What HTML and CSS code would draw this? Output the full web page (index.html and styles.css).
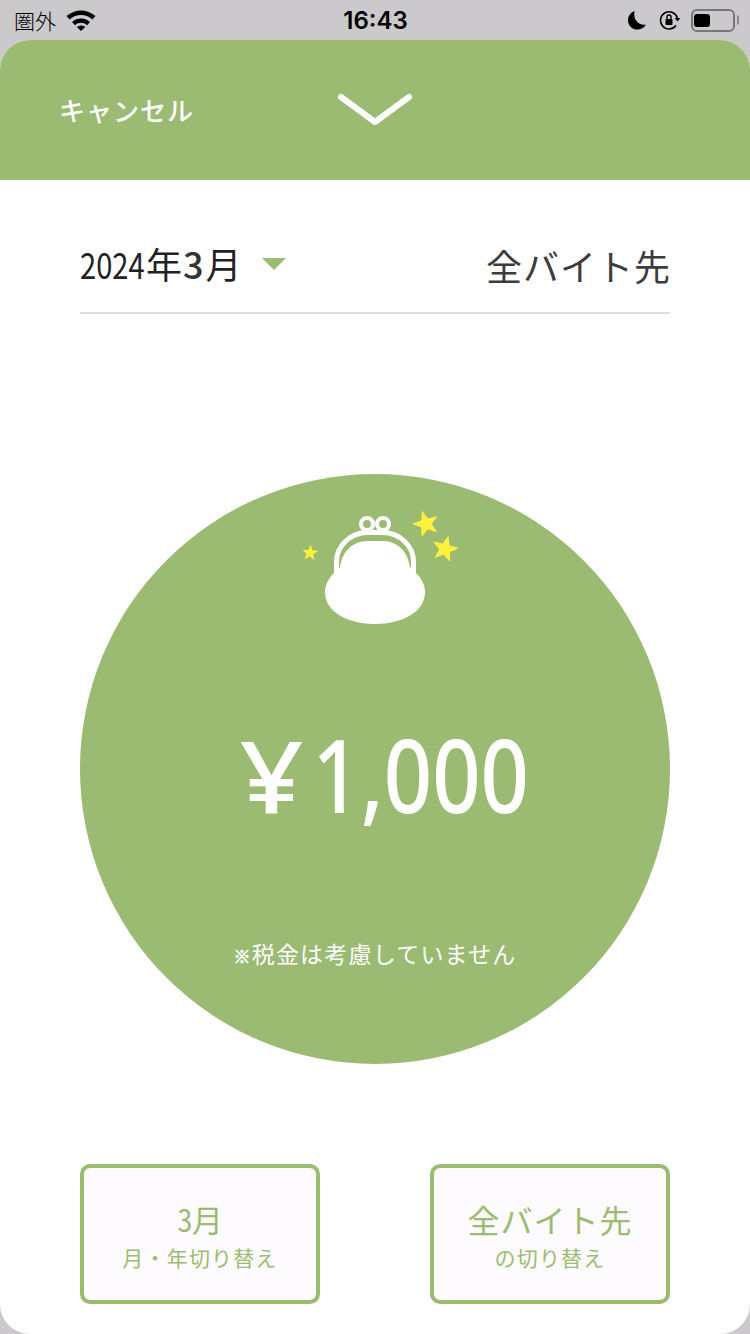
FILE: index.html
```html
<!DOCTYPE html>
<html lang="ja">
  <head>
    <meta charset="UTF-8" />
    <meta name="viewport" content="width=device-width, initial-scale=1.0" />
    <title>今月の給料</title>
    <link rel="stylesheet" href="styles.css">
  </head>
  <body>
    <div class="status-bar">
      <div class="status-left">
        <span class="carrier">圏外</span>
        <svg class="wifi" width="30" height="22" viewBox="0 0 30 22">
          <path d="M0.5 7 C9 -0.5 21 -0.5 29.5 7 L26.4 10.4 C19.8 4.6 10.2 4.6 3.6 10.4 Z" />
          <path d="M6 13 C11.4 8.4 18.6 8.4 24 13 L21 16.2 C17.2 13 12.8 13 9 16.2 Z" />
          <path d="M10.8 18 C13.4 16 16.6 16 19.2 18 L15 22 Z" />
        </svg>
      </div>
      <span class="clock">16:43</span>
      <div class="status-right">
        <svg class="moon" width="18" height="20" viewBox="0 0 18 20">
          <path d="M6.5 1 C2.5 2.6 0 6.2 0 10.2 C0 15.4 4.2 19.6 9.4 19.6 C13 19.6 16.2 17.6 18 14.4 C11.5 15.8 4.8 10.8 6.5 1 Z" />
        </svg>
        <svg width="22" height="20" viewBox="0 0 22 20">
          <path d="M18.4 8 A8.6 8.6 0 1 0 17 15.5" fill="none" stroke="#000" stroke-width="1.6" />
          <path d="M15.6 8 L21.4 8 L18.5 11.6 Z" />
          <rect x="6.5" y="9" width="7" height="6" rx="1" />
          <path d="M8 9 V7 A2 2 0 0 1 12 7 V9" fill="none" stroke="#000" stroke-width="1.4" />
        </svg>
        <div class="battery">
          <div class="battery-level"></div>
        </div>
        <div class="battery-cap"></div>
      </div>
    </div>

    <div class="sheet">
      <header class="sheet-header">
        <span class="cancel">キャンセル</span>
        <svg class="chevron" width="76" height="40" viewBox="0 0 76 40">
          <path d="M4 5 L38 30 L72 5" fill="none" stroke="#fff" stroke-width="6" stroke-linecap="round" stroke-linejoin="round" />
        </svg>
      </header>

      <main class="content">
        <div class="filter-row">
          <div class="month-select">
            <span class="month"><span class="year">2024</span>年<span class="month-num">3</span>月</span>
            <span class="triangle"></span>
          </div>
          <span class="workplace">全バイト先</span>
        </div>

        <div class="total-circle">
          <svg class="purse" width="170" height="115" viewBox="0 0 170 115">
            <defs>
              <polygon id="star" points="0,-1 0.247,-0.34 0.951,-0.309 0.4,0.13 0.588,0.809 0,0.42 -0.588,0.809 -0.4,0.13 -0.951,-0.309 -0.247,-0.34" fill="#fdf03f" />
            </defs>
            <circle cx="77" cy="14" r="6" fill="none" stroke="#fff" stroke-width="4" />
            <circle cx="93" cy="14" r="6" fill="none" stroke="#fff" stroke-width="4" />
            <path d="M46.500 63 V52 C46.500 36 60 22.500 78 22.500 H92 C110 22.500 123.500 36 123.500 52 V63" fill="none" stroke="#fff" stroke-width="5" />
            <path d="M35 82 C35 74 39 68 45 62 L50 57 C52 44 60 31 78 31 L92 31 C110 31 118 44 120 57 L125 62 C131 68 135 74 135 82 C135 102 112 114 85 114 C58 114 35 102 35 82 Z" fill="#fff" />
            <use href="#star" transform="translate(136 14) rotate(-17) scale(14)" />
            <use href="#star" transform="translate(155 39) rotate(14) scale(14)" />
            <use href="#star" transform="translate(20 43) rotate(5) scale(8.500)" />
          </svg>
          <div class="amount"><span class="yen">¥</span><span class="digits">1,000</span></div>
          <p class="tax-note"><span class="note-mark">※</span>税金は考慮していません</p>
        </div>

        <div class="switch-row">
          <button type="button" class="switch-btn">
            <span class="switch-main"><span class="narrow-digit">3</span>月</span>
            <span class="switch-sub">月・年切り替え</span>
          </button>
          <button type="button" class="switch-btn">
            <span class="switch-main wide">全バイト先</span>
            <span class="switch-sub">の切り替え</span>
          </button>
        </div>
      </main>
    </div>
  </body>
</html>
```

FILE: styles.css
```css
* {
  box-sizing: border-box;
}
html,
body {
  height: 100%;
}
body {
  margin: 0;
  background-color: #cbc9cb;
  font-family: "Noto Sans CJK JP", "Noto Sans", sans-serif;
  overflow: hidden;
}
.status-bar {
  height: 40px;
  padding: 0 11px 0 14px;
  display: grid;
  grid-template-columns: 1fr auto 1fr;
  align-items: center;
  color: #000;
}
.status-bar svg {
  display: block;
  fill: #000;
}
.status-left {
  display: flex;
  align-items: center;
  gap: 10px;
}
.carrier {
  font-size: 21px;
  font-weight: 300;
  line-height: 24px;
}
.clock {
  font-family: "Inter", sans-serif;
  font-size: 24px;
  font-weight: 600;
  margin-left: -2px;
}
.status-right {
  display: flex;
  justify-content: flex-end;
  align-items: center;
  gap: 10px;
}
.moon {
  margin-right: 3px;
}
.battery {
  width: 44px;
  height: 23px;
  padding: 3px 1px;
  border: 2px solid #777;
  border-radius: 6px;
}
.battery-level {
  width: 16px;
  height: 100%;
  background-color: #000;
  border-radius: 3px;
}
.battery-cap {
  width: 2px;
  height: 10px;
  margin-left: -8px;
  background-color: #888;
  border-radius: 0 2px 2px 0;
}
.sheet {
  height: 1294px;
  background-color: #fff;
  border-radius: 30px;
  overflow: hidden;
}
.sheet-header {
  height: 140px;
  background-color: #9bbb72;
  position: relative;
  display: flex;
  align-items: center;
  justify-content: center;
}
.cancel {
  position: absolute;
  left: 59px;
  top: 53px;
  color: #fff;
  font-size: 26px;
  font-weight: 500;
  line-height: 34px;
  letter-spacing: 1px;
}
.chevron {
  margin-top: 3px;
}
.content {
  padding: 0 80px;
}
.filter-row {
  height: 134px;
  padding-top: 58px;
  display: flex;
  justify-content: space-between;
  align-items: flex-start;
  border-bottom: 2px solid #dddddd;
}
.month-select {
  display: flex;
  align-items: center;
  gap: 21px;
}
.month {
  color: #222;
  font-size: 36px;
  line-height: 50px;
}
.year {
  display: inline-block;
  transform: scaleX(0.81);
  transform-origin: left;
  margin-right: -14px;
}
.month-num {
  font-weight: 500;
  margin: 0 2px 0 1px;
  color: #333;
}
.triangle {
  width: 0;
  height: 0;
  border-left: 12px solid transparent;
  border-right: 12px solid transparent;
  border-top: 12px solid #9bbb72;
  margin-top: 2px;
}
.workplace {
  color: #3c3c3c;
  font-size: 36px;
  line-height: 54px;
  letter-spacing: 1px;
  margin-right: -1px;
}
.total-circle {
  width: 590px;
  height: 590px;
  margin-top: 160px;
  padding-top: 36px;
  background-color: #9bbb72;
  border-radius: 50%;
  display: flex;
  flex-direction: column;
  align-items: center;
  color: #fff;
}
.purse {
  display: block;
}
.amount {
  margin: 94px 0 0 23px;
  font-family: "Noto Sans", sans-serif;
  font-size: 102px;
  font-weight: 500;
  line-height: 110px;
  display: flex;
  align-items: center;
}
.yen {
  font-size: 100px;
  transform: scaleX(1.12);
  margin-right: 11px;
}
.digits {
  transform: scaleX(0.83);
  margin: 0 -21px;
}
.tax-note {
  margin: 108px 0 0;
  font-size: 23px;
  line-height: 32px;
  letter-spacing: 1.2px;
}
.note-mark {
  font-size: 17px;
  -webkit-text-stroke: 0.7px #fff;
}
.switch-row {
  margin-top: 100px;
  display: flex;
  justify-content: space-between;
}
.switch-btn {
  width: 240px;
  height: 140px;
  padding: 6px 0 0;
  background-color: #fdfbfd;
  border: 4px solid #9bbb72;
  border-radius: 10px;
  color: #9bbb72;
  font-family: inherit;
  display: flex;
  flex-direction: column;
  align-items: center;
  justify-content: center;
}
.switch-main {
  font-size: 31px;
  line-height: 40px;
}
.narrow-digit {
  display: inline-block;
  transform: scaleX(0.85);
  transform-origin: right;
  margin-left: -2px;
}
.switch-main.wide {
  font-size: 32px;
  letter-spacing: 1px;
}
.switch-sub {
  font-size: 21px;
  line-height: 36px;
  letter-spacing: 1.2px;
}
```
